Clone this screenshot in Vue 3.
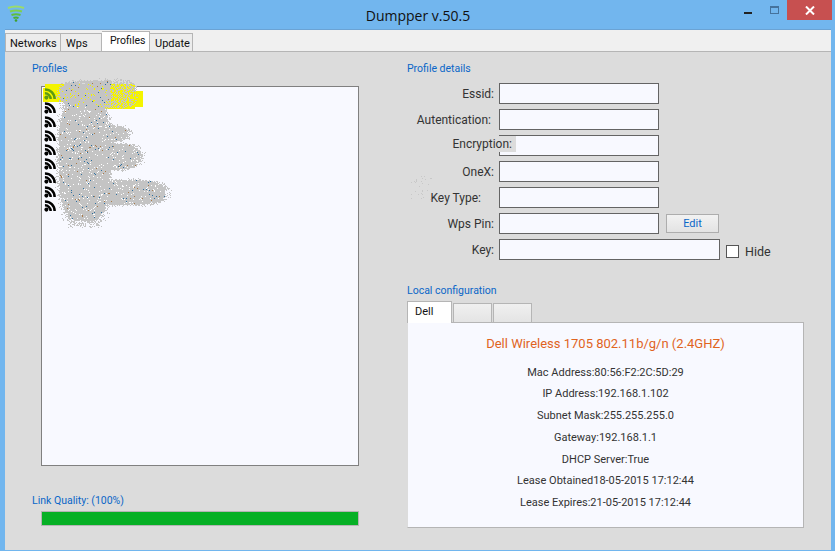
<template>
  <div class="window">
    <header class="titlebar">
      <svg class="logo" width="18" height="18" viewBox="0 0 18 18">
        <path d="M1 3 Q9 0 17 3" stroke="#9bdc6a" stroke-width="2" fill="none" />
        <path d="M3 6.5 Q9 4.5 15 6.5" stroke="#7fd04e" stroke-width="2" fill="none" />
        <path d="M4.5 10 Q9 8.5 13.5 10" stroke="#5fbe3c" stroke-width="2" fill="none" />
        <path d="M6.5 13 Q9 12 11.5 13" stroke="#4caf30" stroke-width="2" fill="none" />
        <circle cx="9" cy="15.5" r="1.3" fill="#3f9f2c" />
      </svg>
      <span class="title">Dumpper v.50.5</span>
      <div class="controls">
        <span class="min"></span>
        <span class="max"></span>
        <span class="close">
          <svg width="10" height="9" viewBox="0 0 10 9">
            <path d="M1 .5 L9 8.5 M9 .5 L1 8.5" stroke="#fff" stroke-width="2" />
          </svg>
        </span>
      </div>
    </header>

    <nav class="tabs">
      <a v-for="tab in tabs" :key="tab" class="tab" :class="{ active: tab === 'Profiles' }">{{ tab }}</a>
    </nav>

    <main class="panel">
      <section class="left">
        <div class="group-label">Profiles</div>
        <div class="list-wrap">
          <ul class="list">
            <li v-for="(n, i) in 9" :key="n" class="row">
              <svg width="12" height="12" viewBox="0 0 13 13">
                <g fill="none" :stroke="i === 0 ? '#5c9a12' : '#000'" stroke-width="2.7">
                  <path d="M1 1.5 A10.5 10.5 0 0 1 11.5 12" />
                  <path d="M1 5.8 A6.2 6.2 0 0 1 7.2 12" />
                </g>
                <circle cx="2.6" cy="10.4" r="2.2" :fill="i === 0 ? '#5c9a12' : '#000'" />
              </svg>
            </li>
          </ul>
          <svg class="scribble" width="140" height="150" viewBox="0 0 140 150">
            <path d="M3 6 H93 V13 H101 V29 H93 V31 H30 V24 H1 V10 H3 Z" fill="#f4f400" />
            <path :d="blob.gray" fill="#c4c4c4" />
            <path :d="blob.white" fill="#ffffff" />
            <path :d="blob.blue" fill="#2f6f9f" />
            <path :d="blob.brown" fill="#a87a4a" />
          </svg>
        </div>
        <div class="group-label quality">Link Quality: (100%)</div>
        <div class="bar"><div class="bar-fill" :style="{ width: quality + '%' }"></div></div>
      </section>

      <section class="right">
        <div class="group-label">Profile details</div>
        <div class="fields">
          <div v-for="f in fields" :key="f.label" class="field">
            <label :class="f.cls">{{ f.label }}</label>
            <div class="input" :class="{ wide: f.wide }"></div>
            <button v-if="f.label === 'Wps Pin:'" class="edit">Edit</button>
            <span v-if="f.wide" class="hide"><i class="check"></i>Hide</span>
          </div>
        </div>

        <div class="group-label local">Local configuration</div>
        <div class="subtabs">
          <span class="subtab active">Dell</span>
          <span class="subtab"></span>
          <span class="subtab"></span>
        </div>
        <div class="adapter">
          <h2>Dell Wireless 1705 802.11b/g/n (2.4GHZ)</h2>
          <p v-for="line in adapter" :key="line">{{ line }}</p>
        </div>
      </section>

      <svg class="dust" width="24" height="26" viewBox="0 0 24 26">
        <path :d="dust" fill="#c8c8c8" />
      </svg>
    </main>
  </div>
</template>

<script setup>
const tabs = ['Networks', 'Wps', 'Profiles', 'Update']
const quality = 100

const fields = [
  { label: 'Essid:' },
  { label: 'Autentication:', cls: 'auth' },
  { label: 'Encryption:', cls: 'enc' },
  { label: 'OneX:' },
  { label: 'Key Type:', cls: 'ktype' },
  { label: 'Wps Pin:' },
  { label: 'Key:', wide: true }
]

const adapter = [
  'Mac Address:80:56:F2:2C:5D:29',
  'IP Address:192.168.1.102',
  'Subnet Mask:255.255.255.0',
  'Gateway:192.168.1.1',
  'DHCP Server:True',
  'Lease Obtained18-05-2015 17:12:44',
  'Lease Expires:21-05-2015 17:12:44'
]

// small seeded random so the scrubbed area looks the same on every load
let seed = 1234
const rnd = () => {
  seed = (seed * 16807) % 2147483647
  return seed / 2147483647
}

const px = (x, y) => `M${x} ${y}h1v1h-1z`

// lumps of the scribble: cx, cy, rx, ry (svg coords, origin at list left, 9px above it)
const lumps = [
  [42, 80, 27, 67],
  [55, 55, 33, 9],
  [62, 78, 38, 14],
  [83, 114, 42, 13],
  [46, 16, 30, 14],
  [70, 15, 24, 14]
]

// superellipse so the body stays blocky but the ends are round
const reach = (x, y) => {
  let best = 9
  for (const [cx, cy, rx, ry] of lumps) {
    const dx = Math.abs(x - cx) / rx
    const dy = Math.abs(y - cy) / ry
    const d = Math.pow(dx * dx * dx + dy * dy * dy, 1 / 3)
    if (d < best) best = d
  }
  return best
}

const makeBlob = () => {
  let gray = ''
  let white = ''
  let blue = ''
  let brown = ''
  for (let y = 0; y < 150; y++) {
    for (let x = 10; x < 135; x++) {
      const d = reach(x, y)
      if (d > 1.12) continue
      const r = rnd()
      if (d > 0.94) {
        // fuzzy edge
        if (r < (1.12 - d) * 3.2) gray += px(x, y)
      } else if (y < 30 && x > 68) {
        // the highlight shows through on the top right
        if (r < 0.45) gray += px(x, y)
      } else if (r < 0.92) {
        gray += px(x, y)
      } else if (r < 0.965) {
        if (y > 28) white += px(x, y)
      } else if (r < 0.98) {
        blue += px(x, y)
      } else if (r < 0.99) {
        brown += px(x, y)
      }
    }
  }
  return { gray, white, blue, brown }
}
const blob = makeBlob()

let dust = ''
for (let i = 0; i < 28; i++) {
  dust += px(Math.floor(rnd() * 22), Math.floor(rnd() * 24))
}
</script>

<style>
html, body {
  margin: 0;
  background: #72b6ee;
}
</style>

<style scoped>
.window {
  width: 835px;
  height: 551px;
  box-sizing: border-box;
  padding: 0 4px 1px 5px;
  display: flex;
  flex-direction: column;
  background: #72b6ee;
  font-family: Roboto, "Liberation Sans", sans-serif;
  font-size: 12px;
  color: #222;
  overflow: hidden;
}

.titlebar {
  height: 29px;
  flex: none;
  position: relative;
  display: flex;
  justify-content: center;
}

.logo {
  position: absolute;
  left: 2px;
  top: 5px;
}

.title {
  margin-top: 6px;
  font-family: "Open Sans", sans-serif;
  font-size: 14px;
  line-height: 20px;
  color: #111;
}

.controls {
  position: absolute;
  right: -1px;
  top: 0;
  display: flex;
}

.min {
  width: 8px;
  height: 2px;
  margin: 12px 0 0 0;
  background: #222;
}

.max {
  width: 7px;
  height: 5px;
  margin: 6px 0 0 18px;
  border: 1px solid #45729c;
  border-top-width: 2px;
}

.close {
  width: 45px;
  height: 20px;
  margin-left: 8px;
  background: #c75050;
  display: flex;
  align-items: center;
  justify-content: center;
}

.tabs {
  height: 22px;
  flex: none;
  box-sizing: border-box;
  border-top: 1px solid #6ba3d4;
  background: #f0f0f0;
  display: flex;
  align-items: flex-end;
}

.tab {
  width: 41px;
  height: 18px;
  box-sizing: border-box;
  padding: 2px 0 0 5px;
  border: 1px solid #b5b5b5;
  border-bottom: none;
  border-left-width: 0;
  background: #ececec;
  font-size: 11px;
  line-height: 15px;
  color: #111;
}

.tab:first-child {
  width: 56px;
  padding-left: 4px;
  border-left-width: 1px;
}

.tab:last-child {
  width: 43px;
}

.tab.active {
  width: 48px;
  height: 21px;
  padding: 1px 0 0 8px;
  margin-bottom: -1px;
  background: #fff;
  border-left: none;
  font-size: 10.5px;
  position: relative;
}

.panel {
  flex: 1;
  position: relative;
  border-top: 1px solid #b5b5b5;
  padding-top: 8px;
  background: #dcdcdc;
  display: flex;
}

.left {
  width: 375px;
  margin-left: 27px;
  flex: none;
}

.group-label {
  height: 16px;
  line-height: 18px;
  font-size: 10.5px;
  color: #0a66c8;
}

.list-wrap {
  position: relative;
  width: 318px;
  height: 380px;
  margin: 10px 0 0 9px;
  box-sizing: border-box;
  border: 1px solid #808080;
  background: #f8f9ff;
}

.list {
  list-style: none;
  margin: 0;
  padding: 0 0 0 2px;
  position: relative;
  z-index: 1;
}

.row {
  height: 14px;
  display: flex;
  align-items: center;
}

.scribble {
  position: absolute;
  left: 0;
  top: -9px;
  overflow: visible;
  pointer-events: none;
}

.quality {
  margin-top: 26px;
}

.bar {
  width: 318px;
  height: 15px;
  margin: 3px 0 0 9px;
  box-sizing: border-box;
  border: 1px solid #b4b4b4;
}

.bar-fill {
  height: 100%;
  background: #06b025;
}

.right {
  width: 400px;
  flex: none;
}

.fields {
  margin-top: 7px;
  display: flex;
  flex-direction: column;
  gap: 5px;
}

.field {
  height: 21px;
  display: flex;
  align-items: center;
}

.field label {
  width: 92px;
  flex: none;
  box-sizing: border-box;
  padding-right: 5px;
  text-align: right;
  font-size: 12px;
  color: #333;
}

.field label.auth {
  padding-right: 8px;
}

.field label.ktype {
  padding-right: 18px;
}

.field label.enc {
  width: 109px;
  margin-right: -17px;
  position: relative;
  z-index: 1;
  padding-right: 4px;
  line-height: 16px;
  margin-top: -3px;
  background: linear-gradient(to right, transparent 92px, #dcdcdc 92px);
}

.input {
  width: 160px;
  height: 21px;
  box-sizing: border-box;
  border: 1px solid #646464;
  background: #f8f9ff;
}

.input.wide {
  width: 221px;
}

.edit {
  width: 53px;
  height: 19px;
  margin-left: 7px;
  padding: 0;
  border: 1px solid #adadad;
  background: linear-gradient(#f2f2f2, #e3e3e3);
  font-family: inherit;
  font-size: 11px;
  color: #0a66c8;
}

.hide {
  display: flex;
  align-items: center;
  margin: 3px 0 0 6px;
  font-size: 12.5px;
  color: #333;
}

.check {
  width: 13px;
  height: 13px;
  margin-right: 6px;
  box-sizing: border-box;
  border: 1px solid #555;
  background: #fff;
}

.local {
  margin-top: 22px;
}

.subtabs {
  height: 21px;
  margin-top: 3px;
  display: flex;
  align-items: flex-end;
  gap: 1px;
  position: relative;
  z-index: 1;
}

.subtab {
  width: 39px;
  height: 19px;
  box-sizing: border-box;
  border: 1px solid #b5b5b5;
  border-bottom: none;
  background: linear-gradient(#f0f0f0, #e4e4e4);
}

.subtab.active {
  width: 45px;
  height: 22px;
  margin-bottom: -1px;
  padding: 3px 0 0 7px;
  background: #fff;
  font-size: 11px;
  color: #111;
}

.adapter {
  width: 397px;
  height: 206px;
  box-sizing: border-box;
  padding-top: 12px;
  border: 1px solid #b5b5b5;
  border-left-color: #dcdcdc;
  background: #f8f9ff;
  text-align: center;
  color: #333;
}

.adapter h2 {
  margin: 0 0 9.5px;
  height: 17px;
  line-height: 17px;
  font-size: 13px;
  font-weight: normal;
  color: #e0641e;
}

.adapter p {
  margin: 0;
  height: 21.8px;
  line-height: 21.8px;
  font-size: 11px;
}

.dust {
  position: absolute;
  left: 405px;
  top: 124px;
}
</style>
